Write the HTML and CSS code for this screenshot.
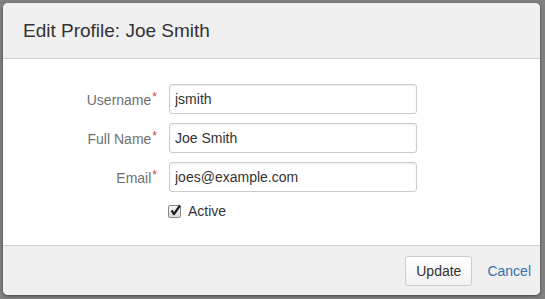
FILE: index.html
```html
<!DOCTYPE html>
<html lang="en">
<head>
  <meta charset="UTF-8" />
  <title>Edit Profile</title>
  <link rel="stylesheet" href="styles.css">
</head>
<body>

<!-- Dialog -->
<section class="dialog">
  <header class="dialog-header">
    <h2>Edit Profile: Joe Smith</h2>
  </header>

  <form class="dialog-body">
    <div class="field">
      <label for="username">Username<span class="req">*</span></label>
      <input id="username" type="text" value="jsmith">
    </div>
    <div class="field">
      <label for="fullname">Full Name<span class="req">*</span></label>
      <input id="fullname" type="text" value="Joe Smith">
    </div>
    <div class="field">
      <label for="email">Email<span class="req">*</span></label>
      <input id="email" type="text" value="joes@example.com">
    </div>
    <div class="field check">
      <span></span>
      <label class="check-label">
        <span class="box">
          <svg width="13" height="13" viewBox="0 0 13 13">
            <path d="M2.5 6.5 L5 10 L11 1.5" fill="none" stroke="#222" stroke-width="2.2" stroke-linejoin="round"/>
          </svg>
        </span>
        Active
      </label>
    </div>
  </form>

  <footer class="dialog-footer">
    <button class="btn">Update</button>
    <a href="#" class="cancel">Cancel</a>
  </footer>
</section>

</body>
</html>
```

FILE: styles.css
```css
* {
  box-sizing: border-box;
}

html, body {
  margin: 0;
  padding: 0;
  font-family: 'Liberation Sans', Arial, sans-serif;
  background-color: #808080;
  color: #333;
}

body {
  padding: 3px 5px 4px 3px;
  height: 299px;
}

.dialog {
  background: white;
  border-radius: 5px;
  box-shadow: 0 1px 3px rgba(0,0,0,0.5);
  height: 292px;
  display: flex;
  flex-direction: column;
  overflow: hidden;
}

.dialog-header {
  background-color: #f0f0f0;
  border-bottom: 1px solid #cccccc;
  height: 56px;
  display: flex;
  align-items: center;
  padding: 0 20px;
}

.dialog-header h2 {
  margin: 0;
  font-size: 19px;
  font-weight: normal;
  color: #333;
}

.dialog-body {
  flex: 1;
  margin: 0;
  padding: 25px 0 0;
  display: flex;
  flex-direction: column;
  gap: 9px;
}

.field {
  display: grid;
  grid-template-columns: 154px 248px;
  column-gap: 12px;
  align-items: center;
}

.field label {
  text-align: right;
  font-size: 14px;
  color: #707070;
}

.req {
  color: #d04437;
  font-size: 12px;
  vertical-align: 4px;
  margin-left: 1px;
}

.field input[type="text"] {
  height: 30px;
  border: 1px solid #cccccc;
  border-radius: 3px;
  padding: 0 5px;
  font-family: inherit;
  font-size: 14px;
  color: #333;
  box-shadow: inset 0 1px 2px rgba(0,0,0,0.08);
}

.field.check {
  margin-top: 2px;
}

.field .check-label {
  text-align: left;
  color: #333;
  display: flex;
  align-items: center;
  gap: 7px;
  margin-left: -1px;
}

.box {
  width: 13px;
  height: 13px;
  border: 1px solid #8a8a8a;
  border-radius: 2px;
  background: linear-gradient(#f4f4f4, #dcdcdc);
  position: relative;
}

.box svg {
  position: absolute;
  left: 0;
  top: -2px;
}

.dialog-footer {
  background-color: #f0f0f0;
  border-top: 1px solid #cccccc;
  height: 50px;
  display: flex;
  align-items: center;
  justify-content: flex-end;
  padding: 0 9px 0 0;
  gap: 15px;
}

.btn {
  height: 30px;
  padding: 0 10px;
  font-family: inherit;
  font-size: 14px;
  color: #333;
  background: linear-gradient(#ffffff, #f2f2f2);
  border: 1px solid #cccccc;
  border-radius: 3px;
}

.cancel {
  color: #3572b0;
  text-decoration: none;
  font-size: 14px;
}
```
